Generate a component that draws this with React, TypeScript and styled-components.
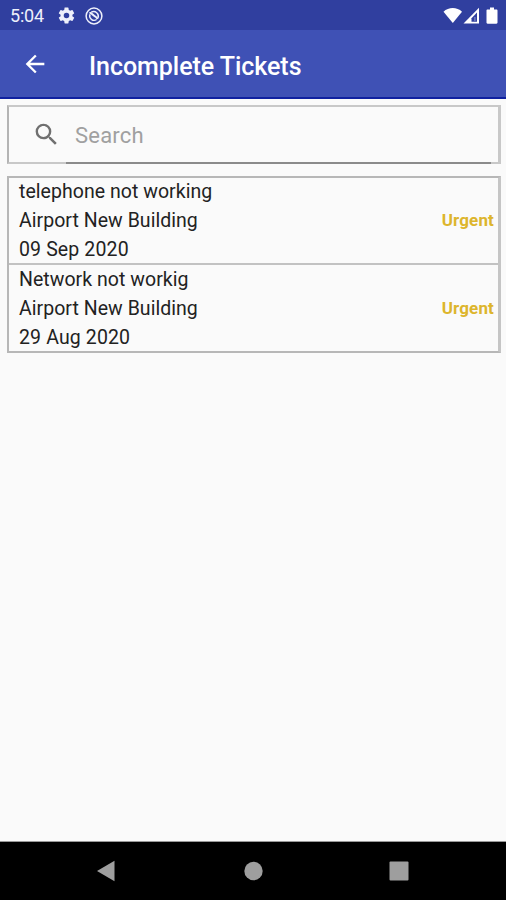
import React from "react";
import styled, { createGlobalStyle } from "styled-components";

const GlobalStyle = createGlobalStyle`
  * { box-sizing: border-box; }
  body { margin: 0; background: #fafafa; font-family: Roboto, sans-serif; }
`;

const Screen = styled.div`
  width: 506px;
  height: 900px;
  display: flex;
  flex-direction: column;
  background: #fafafa;
  overflow: hidden;
`;

const StatusBar = styled.div`
  height: 30px;
  flex: none;
  display: flex;
  align-items: center;
  padding: 2px 7px 0 10px;
  background: #303f9f;
  color: #eef0fb;
`;

const Clock = styled.span`
  width: 46px;
  font-size: 18px;
  line-height: 28px;
  letter-spacing: -0.2px;
`;

const StatusIcons = styled.div`
  display: flex;
  align-items: center;
  gap: 9px;
  margin: -1px 0 0 0.5px;
`;

const SignalIcons = styled.div`
  display: flex;
  align-items: center;
  margin: -1px 0 0 auto;
`;

const AppBar = styled.header`
  height: 69px;
  flex: none;
  display: flex;
  align-items: center;
  padding: 1px 0 0 21px;
  background: #3f51b5;
  border-bottom: 2px solid #1021a0;
`;

const BackButton = styled.button`
  display: flex;
  width: 68px;
  padding: 0;
  border: 0;
  background: none;
`;

const Title = styled.h1`
  margin: 6px 0 0;
  font-size: 25px;
  line-height: 32px;
  font-weight: 500;
  letter-spacing: -0.04px;
  color: #fff;
`;

const Content = styled.main`
  flex: 1;
  padding: 6px 5px 0 7px;
`;

const SearchBox = styled.div`
  height: 59px;
  display: flex;
  align-items: stretch;
  padding-right: 7px;
  border: 2px solid #c8c8c8;
  border-right-width: 3px;
  border-left-color: #b4b4b4;
`;

const SearchIconCell = styled.div`
  width: 57px;
  display: flex;
  align-items: center;
  padding-left: 22.5px;
`;

const SearchInput = styled.input`
  flex: 1;
  min-width: 0;
  height: 57px;
  padding: 2px 0 0 9px;
  border: 0;
  border-bottom: 2px solid #8b8b8b;
  outline: 0;
  background: transparent;
  font: 400 22px/30px Roboto, sans-serif;
  letter-spacing: 0.2px;
  color: #222;

  &::placeholder {
    color: #a0a0a0;
    opacity: 1;
  }
`;

const TicketList = styled.ul`
  height: 177px;
  margin: 12px 0 0;
  padding: 0;
  list-style: none;
  border: 2px solid #b7b7b7;
  border-right-width: 3px;
  border-right-color: #c5c5c5;
`;

const TicketRow = styled.li`
  display: flex;
  align-items: center;
  justify-content: space-between;
  height: 85px;
  padding: 0 4px 0 10px;

  & + & {
    height: 88px;
    border-top: 2px solid #c2c2c2;
  }
`;

const TicketDetails = styled.div`
  display: flex;
  flex-direction: column;
  font-size: 19.5px;
  line-height: 29px;
  color: #222;
`;

const DetailLine = styled.span<{ $spacing: number }>`
  white-space: nowrap;
  letter-spacing: ${({ $spacing }) => $spacing}px;
`;

const Priority = styled.span`
  font-size: 17px;
  line-height: 21px;
  font-weight: 700;
  letter-spacing: 0.15px;
  color: #ddb52c;
`;

const NavBar = styled.nav`
  height: 58px;
  flex: none;
  display: flex;
  align-items: center;
  justify-content: space-between;
  padding: 0 97px 0 96px;
  background: #000;
  box-shadow: 0 -1px 0 #999;
`;

const tickets = [
  { subject: "telephone not working", place: "Airport New Building", date: "09 Sep 2020", priority: "Urgent" },
  { subject: "Network not workig", place: "Airport New Building", date: "29 Aug 2020", priority: "Urgent" },
];

const GearIcon = () => (
  <svg width="19" height="19" viewBox="0 0 24 24" fill="#eef0fb">
    <path d="M19.43 12.98c.04-.32.07-.64.07-.98s-.03-.66-.07-.98l2.11-1.65c.19-.15.24-.42.12-.64l-2-3.46c-.12-.22-.39-.3-.61-.22l-2.49 1c-.52-.4-1.08-.73-1.69-.98l-.38-2.65A.49.49 0 0 0 14 2h-4c-.25 0-.46.18-.49.42l-.38 2.65c-.61.25-1.17.59-1.69.98l-2.49-1c-.23-.09-.49 0-.61.22l-2 3.46c-.13.22-.07.49.12.64l2.11 1.65c-.04.32-.07.65-.07.98s.03.66.07.98l-2.11 1.65c-.19.15-.24.42-.12.64l2 3.46c.12.22.39.3.61.22l2.49-1c.52.4 1.08.73 1.69.98l.38 2.65c.03.24.24.42.49.42h4c.25 0 .46-.18.49-.42l.38-2.65c.61-.25 1.17-.59 1.69-.98l2.49 1c.23.09.49 0 .61-.22l2-3.46c.12-.22.07-.49-.12-.64l-2.11-1.65zM12 15.500A3.500 3.500 0 1 1 12 8.500a3.500 3.500 0 0 1 0 7z" />
  </svg>
);

const SyncDisabledIcon = () => (
  <svg width="18" height="18" viewBox="0 0 18 18" fill="none" stroke="#eef0fb">
    <circle cx="9" cy="9" r="7.900" strokeWidth="1.500" />
    <path d="M5 7.300A4.400 4.400 0 0 0 11.600 12.500" strokeWidth="1.400" />
    <path d="M6.300 5.200A4.700 4.700 0 0 1 13 11" strokeWidth="1.400" />
    <path d="M4.500 6.300c1.600-1 2.700 1.300 4.200 2.100S11.300 9.700 12.700 12" strokeWidth="2" />
  </svg>
);

const SignalStatus = () => (
  <svg width="56" height="20" viewBox="0 0 56 20" fill="#fff">
    <path d="M.5 5.700C5.500.9 14 .9 19 5.700L9.800 17z" />
    <path d="M20.500 17.500 36 1.800v15.700z" />
    <path d="M28.500 12.200 34 6.500v9.300h-5.500z" fill="#303f9f" />
    <path d="M31.200 11h1.400v4h-1.400z" opacity=".35" />
    <path d="M44.500 3.500H47V1.500h4v2h2.500c.7 0 1 .5 1 1v12c0 .7-.4 1.200-1.100 1.200h-8.800c-.7 0-1.100-.5-1.100-1.200v-12c0-.6.4-1 1-1z" />
  </svg>
);

const ArrowBackIcon = () => (
  <svg width="28" height="28" viewBox="0 0 24 24" fill="#fff">
    <path d="M20 11H7.830l5.590-5.590L12 4l-8 8 8 8 1.410-1.410L7.830 13H20v-2z" />
  </svg>
);

const SearchIcon = () => (
  <svg width="29" height="29" viewBox="0 0 24 24" fill="#707070">
    <path d="M15.500 14h-.790l-.280-.270A6.470 6.470 0 0 0 16 9.500 6.500 6.500 0 1 0 9.500 16c1.610 0 3.090-.590 4.230-1.570l.270.280v.790l5 4.990L20.490 19l-4.990-5zm-6 0C7.010 14 5 11.990 5 9.500S7.010 5 9.500 5 14 7.010 14 9.500 11.990 14 9.500 14z" />
  </svg>
);

const NavBackIcon = () => (
  <svg width="20" height="22" viewBox="0 0 20 22">
    <path d="M1 11 18.500.700v20.600z" fill="#9e9e9e" />
  </svg>
);

const NavHomeIcon = () => (
  <svg width="20" height="20" viewBox="0 0 20 20">
    <circle cx="10.500" cy="10" r="9.200" fill="#9e9e9e" />
  </svg>
);

const NavRecentsIcon = () => (
  <svg width="20" height="20" viewBox="0 0 20 20">
    <rect x=".5" y=".5" width="19" height="19" rx="1" fill="#9e9e9e" />
  </svg>
);

export default function App() {
  return (
    <>
      <GlobalStyle />
      <Screen>
        <StatusBar>
          <Clock>5:04</Clock>
          <StatusIcons>
            <GearIcon />
            <SyncDisabledIcon />
          </StatusIcons>
          <SignalIcons>
            <SignalStatus />
          </SignalIcons>
        </StatusBar>
        <AppBar>
          <BackButton aria-label="Back">
            <ArrowBackIcon />
          </BackButton>
          <Title>Incomplete Tickets</Title>
        </AppBar>
        <Content>
          <SearchBox>
            <SearchIconCell>
              <SearchIcon />
            </SearchIconCell>
            <SearchInput placeholder="Search" />
          </SearchBox>
          <TicketList>
            {tickets.map((ticket) => (
              <TicketRow key={ticket.date}>
                <TicketDetails>
                  <DetailLine $spacing={0.04}>{ticket.subject}</DetailLine>
                  <DetailLine $spacing={0.04}>{ticket.place}</DetailLine>
                  <DetailLine $spacing={0.13}>{ticket.date}</DetailLine>
                </TicketDetails>
                <Priority>{ticket.priority}</Priority>
              </TicketRow>
            ))}
          </TicketList>
        </Content>
        <NavBar>
          <NavBackIcon />
          <NavHomeIcon />
          <NavRecentsIcon />
        </NavBar>
      </Screen>
    </>
  );
}
